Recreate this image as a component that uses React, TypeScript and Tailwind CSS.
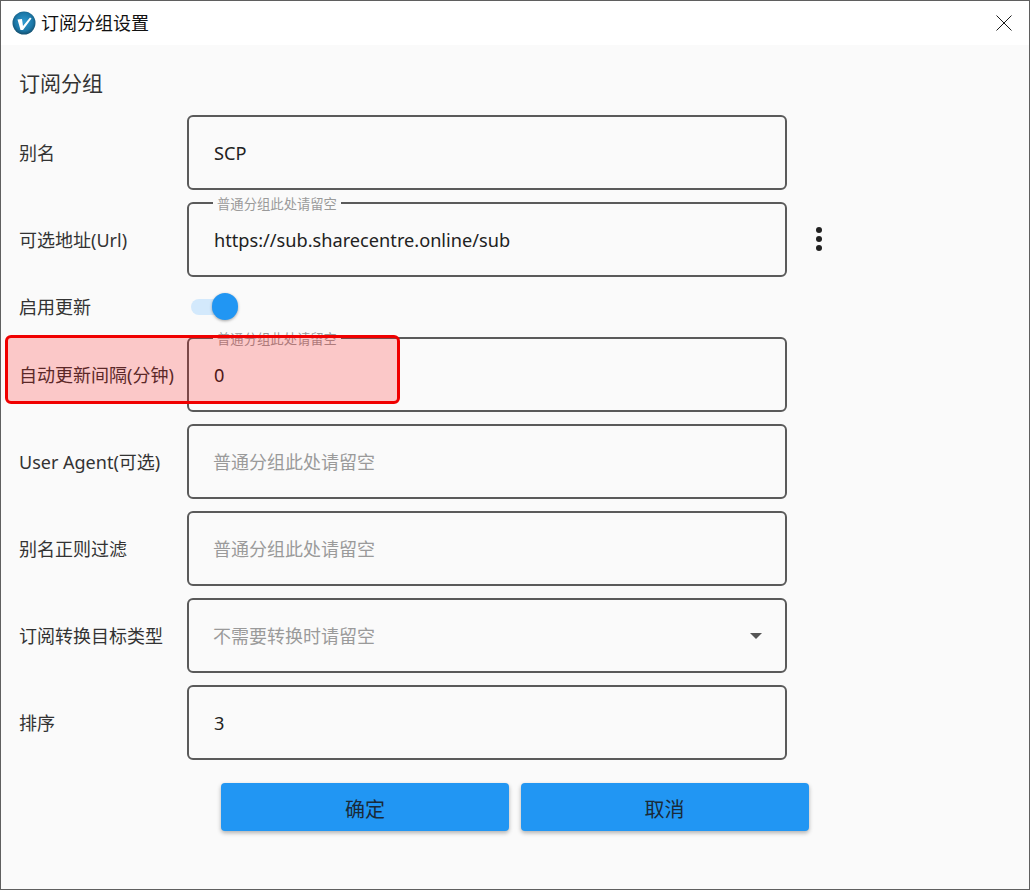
import React from 'react';

const FONT = "font-['Noto_Sans','Noto_Sans_CJK_SC',sans-serif]";

const Hint: React.FC = () => (
  <span className="absolute left-[24px] top-[-7px] bg-[#fafafa] px-[4px] text-[13.33px] leading-[15px] text-[#9a9a9a]">
    普通分组此处请留空
  </span>
);

const Field: React.FC<{ label: string; value?: string; placeholder?: string; hint?: boolean; children?: React.ReactNode }> = ({
  label,
  value,
  placeholder,
  hint,
  children,
}) => (
  <div className="flex items-center">
    <label className="w-[168px] pt-[2px] text-[18px] text-[#333333]">{label}</label>
    <div className="relative flex h-[75px] w-[600px] items-center rounded-[6px] border-2 border-[#5a5a5a] pl-[25px] pr-[22px] pt-[2px] text-[18px]">
      {hint && <Hint />}
      {value ? (
        <span className="text-[18.18px] text-[#212121]">{value}</span>
      ) : (
        <span className="ml-[-1px] text-[#9a9a9a]">{placeholder}</span>
      )}
      {children}
    </div>
  </div>
);

const Logo: React.FC = () => (
  <svg width="24" height="24" viewBox="0 0 24 24">
    <defs>
      <radialGradient id="lg" cx="50%" cy="45%" r="55%">
        <stop offset="0%" stopColor="#2f9ad0" />
        <stop offset="70%" stopColor="#1c78a8" />
        <stop offset="100%" stopColor="#14506f" />
      </radialGradient>
    </defs>
    <circle cx="12" cy="12" r="11.5" fill="url(#lg)" />
    <path d="M5.5 8.5 L10 8 L11 15 L18 6.5 L19.5 7.5 L11 19 L8.5 19 Z" fill="#ffffff" />
  </svg>
);

export default function App() {
  return (
    <div className={`relative h-[890px] w-[1030px] overflow-hidden border border-[#5f5f5f] bg-[#fafafa] ${FONT}`}>
      {/* Title bar */}
      <div className="flex h-[44px] items-center justify-between bg-white pl-[11px] pr-[17px]">
        <div className="flex items-center gap-[5px]">
          <Logo />
          <span className="text-[18px] text-[#111111]">订阅分组设置</span>
        </div>
        <svg width="16" height="16" viewBox="0 0 16 16" className="mt-[-1px]">
          <path d="M0.5 0.5 L15.5 15.5 M15.5 0.5 L0.5 15.5" stroke="#1a1a1a" strokeWidth="1" fill="none" />
        </svg>
      </div>

      {/* Form */}
      <div className="pl-[18px] pt-[23px]">
        <h2 className="mb-[17px] h-[30px] text-[21px] leading-[30px] text-[#333333]">订阅分组</h2>
        <div className="flex flex-col gap-[12px]">
          <Field label="别名" value="SCP" />
          <Field label="可选地址(Url)" value="https://sub.sharecentre.online/sub" hint>
            <svg width="6" height="24" viewBox="0 0 6 24" className="absolute left-[626.5px] top-[23px]">
              <circle cx="3" cy="3" r="3" fill="#212121" />
              <circle cx="3" cy="12" r="3" fill="#212121" />
              <circle cx="3" cy="21" r="3" fill="#212121" />
            </svg>
          </Field>
          <div className="flex h-[36px] items-center">
            <label className="w-[172px] text-[18px] text-[#333333]">启用更新</label>
            <div className="relative h-[16px] w-[38px] rounded-full bg-[#d3e9fc]">
              <span className="absolute left-[21px] top-[-6px] h-[27px] w-[26px] rounded-full bg-[#2196f3] shadow-[0_1px_3px_rgba(0,0,0,0.35)]" />
            </div>
          </div>
          <Field label="自动更新间隔(分钟)" value="0" hint />
          <Field label="User Agent(可选)" placeholder="普通分组此处请留空" />
          <Field label="别名正则过滤" placeholder="普通分组此处请留空" />
          <Field label="订阅转换目标类型" placeholder="不需要转换时请留空">
            <span className="absolute right-[23px] top-[33px] h-0 w-0 border-x-[6px] border-t-[6px] border-x-transparent border-t-[#555555]" />
          </Field>
          <Field label="排序" value="3" />
        </div>

        <div className="ml-[202px] mt-[23px] flex gap-[11.5px]">
          <button className="h-[48px] w-[288px] rounded-[4px] bg-[#2196f3] pt-[6px] text-[20px] text-[#1a2a38] shadow-[0_2px_4px_rgba(0,0,0,0.3)]">
            确定
          </button>
          <button className="h-[48px] w-[288px] rounded-[4px] bg-[#2196f3] pt-[6px] text-[20px] text-[#1a2a38] shadow-[0_2px_4px_rgba(0,0,0,0.3)]">
            取消
          </button>
        </div>
      </div>

      {/* Red annotation over the interval row */}
      <div className="absolute left-[4px] top-[334px] h-[69px] w-[395px] rounded-[6px] border-[3px] border-[#f00000] bg-[rgba(255,0,0,0.2)]" />
    </div>
  );
}
